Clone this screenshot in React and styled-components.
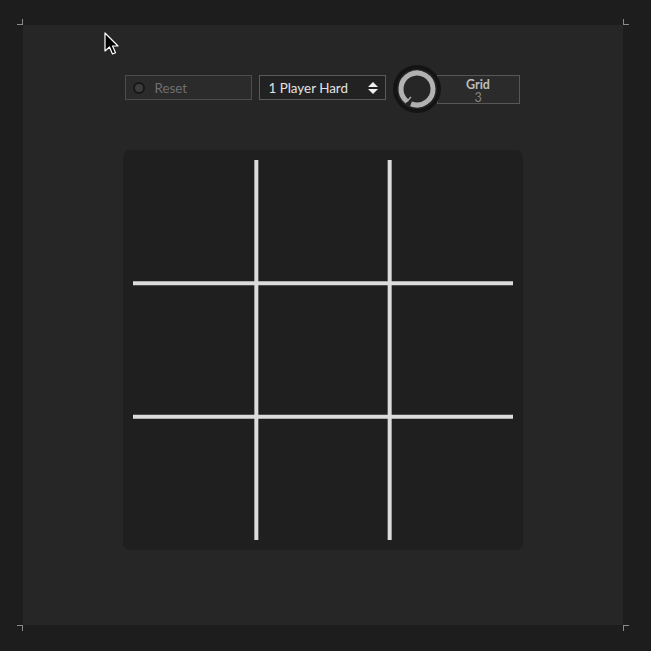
import React from "react";
import styled, { createGlobalStyle } from "styled-components";

const Global = createGlobalStyle`
  html, body { margin: 0; padding: 0; background: #1d1d1d; }
  body { font-family: Lato, "Open Sans", sans-serif; }
`;

const Stage = styled.div`
  position: relative;
  width: 651px;
  height: 651px;
  padding: 25px 0 0 23px;
  box-sizing: border-box;
`;

const Panel = styled.div`
  position: relative;
  width: 600px;
  height: 600px;
  background: #262626;
  display: flex;
  flex-direction: column;
  align-items: center;
  padding-top: 50px;
  box-sizing: border-box;
  gap: 50px;
`;

const Corner = styled.span`
  position: absolute;
  width: 5px;
  height: 5px;
  border-color: #8a8a8a;
  border-style: solid;
  border-width: 0;
  ${(p) => p.$pos === "tl" && `left:-6px; top:-6px; border-right-width:1px; border-bottom-width:1px;`}
  ${(p) => p.$pos === "tr" && `right:-6px; top:-6px; border-left-width:1px; border-bottom-width:1px;`}
  ${(p) => p.$pos === "bl" && `left:-6px; bottom:-6px; border-right-width:1px; border-top-width:1px;`}
  ${(p) => p.$pos === "br" && `right:-6px; bottom:-6px; border-left-width:1px; border-top-width:1px;`}
`;

const Toolbar = styled.div`
  display: flex;
  align-items: flex-start;
  height: 25px;
  margin-left: -2px;
`;

const ResetButton = styled.div`
  width: 127px;
  height: 25px;
  box-sizing: border-box;
  border: 1px solid #4c4c4c;
  background: #2b2b2b;
  display: flex;
  align-items: center;
  padding-left: 7px;
  gap: 10px;
  color: #6f6f6f;
  font-size: 13.4px;
`;

const Led = styled.span`
  width: 8px;
  height: 8px;
  border-radius: 50%;
  background: #3c3c3c;
  border: 2px solid #181818;
`;

const Select = styled.div`
  width: 127px;
  height: 25px;
  box-sizing: border-box;
  margin-left: 7px;
  border: 1px solid #5a5a5a;
  background: #222222;
  display: flex;
  align-items: center;
  justify-content: space-between;
  padding: 0 7px 0 9px;
  color: #e2e2e2;
  font-size: 13.4px;
`;

const KnobWrap = styled.div`
  position: relative;
  z-index: 1;
  width: 48px;
  height: 48px;
  margin: -10px -4px 0 7px;
`;

const GridBox = styled.div`
  width: 83px;
  height: 29px;
  box-sizing: border-box;
  border: 1px solid #575757;
  background: #2b2b2b;
  display: flex;
  flex-direction: column;
  align-items: center;
  padding-top: 2px;
  line-height: 13px;
`;

const GridLabel = styled.span`
  font-weight: 700;
  font-size: 12.5px;
  color: #bdbdbd;
`;

const GridValue = styled.span`
  font-size: 12.5px;
  color: #858585;
`;

const Board = styled.div`
  position: relative;
  width: 400px;
  height: 400px;
  background: #1f1f1f;
  border-radius: 7px;
`;

const Cursor = styled.svg`
  position: absolute;
  left: 104px;
  top: 32px;
`;

function Knob() {
  const cx = 24, cy = 24, r = 16;
  const a0 = (128 * Math.PI) / 180;
  const a1 = (112 * Math.PI) / 180 + 2 * Math.PI;
  const p = (a) => [cx + r * Math.cos(a), cy + r * Math.sin(a)];
  const [x0, y0] = p(a0);
  const [x1, y1] = p(a1);
  return (
    <KnobWrap>
      <svg width="48" height="48" viewBox="0 0 48 48">
        <circle cx={cx} cy={cy} r="24" fill="#141414" />
        <circle cx={cx} cy={cy} r="20" fill="#262626" />
        <path
          d={`M ${x0} ${y0} A ${r} ${r} 0 1 1 ${x1} ${y1}`}
          stroke="#b2b2b2"
          strokeWidth="5"
          fill="none"
        />
        <line x1={x0} y1={y0} x2={cx + 10 * Math.cos(a0)} y2={cy + 10 * Math.sin(a0)} stroke="#b2b2b2" strokeWidth="1.5" />
      </svg>
    </KnobWrap>
  );
}

export default function App() {
  const third = 400 / 3;
  return (
    <>
      <Global />
      <Stage>
        <Panel>
          <Corner $pos="tl" />
          <Corner $pos="tr" />
          <Corner $pos="bl" />
          <Corner $pos="br" />
          <Toolbar>
            <ResetButton>
              <Led />
              <span>Reset</span>
            </ResetButton>
            <Select>
              <span>1 Player Hard</span>
              <svg width="10" height="14" viewBox="0 0 10 14">
                <polygon points="5,1 10,6 0,6" fill="#f0f0f0" />
                <polygon points="0,8 10,8 5,13" fill="#f0f0f0" />
              </svg>
            </Select>
            <Knob />
            <GridBox>
              <GridLabel>Grid</GridLabel>
              <GridValue>3</GridValue>
            </GridBox>
          </Toolbar>
          <Board>
            <svg width="400" height="400" viewBox="0 0 400 400">
              <g stroke="#dcdcdc" strokeWidth="4">
                <line x1={third} y1="10" x2={third} y2="390" />
                <line x1={2 * third} y1="10" x2={2 * third} y2="390" />
                <line x1="10" y1={third} x2="390" y2={third} />
                <line x1="10" y1={2 * third} x2="390" y2={2 * third} />
              </g>
            </svg>
          </Board>
        </Panel>
        <Cursor width="16" height="26" viewBox="0 0 16 26">
          <path d="M1 1 L1 19 L5.5 15 L8.5 22 L11.5 20.7 L8.5 14 L14 14 Z" fill="#000" stroke="#fff" strokeWidth="1.2" strokeLinejoin="round" />
        </Cursor>
      </Stage>
    </>
  );
}
